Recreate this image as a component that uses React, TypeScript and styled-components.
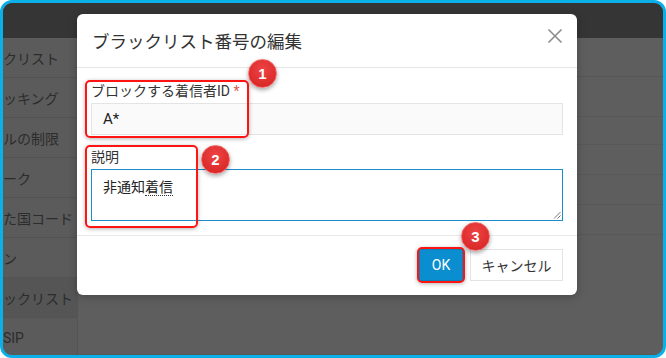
import React from 'react';
import styled, { createGlobalStyle } from 'styled-components';

const FONT = `Roboto, "Noto Sans CJK JP", "Noto Sans", sans-serif`;

const sideItems = ['クリスト', 'ッキング', 'ルの制限', 'ーク', 'た国コード', 'ン', 'ックリスト', 'SIP'];
const mainRows = [40, 28, 30, 30, 30, 120];

const Global = createGlobalStyle`
  html, body {
    margin: 0;
    padding: 0;
    background: #ffffff;
  }
  * {
    box-sizing: border-box;
  }
`;

export default function App() {
  return (
    <>
      <Global />
      <Frame>
        <TopBar />
        <Body>
          <Sidebar>
            {sideItems.map((label, i) => (
              <SideItem key={label} $active={i === 6}>
                {label}
              </SideItem>
            ))}
          </Sidebar>
          <Main>
            <MainHead />
            {mainRows.map((h, i) => (
              <MainRow key={i} style={{ height: h }} />
            ))}
          </Main>
        </Body>

        <Modal>
          <ModalHeader>
            <Title>ブラックリスト番号の編集</Title>
            <CloseButton aria-label="close">
              <svg width="16" height="16" viewBox="0 0 16 16">
                <path d="M1.5 1.5 L14.5 14.5 M14.5 1.5 L1.5 14.5" stroke="#8c8c8c" strokeWidth="1.6" fill="none" />
              </svg>
            </CloseButton>
          </ModalHeader>
          <ModalBody>
            <Field>
              <Label>
                ブロックする着信者ID <Required>*</Required>
              </Label>
              <Input>A*</Input>
            </Field>
            <Field>
              <Label>説明</Label>
              <TextArea>
                非通知<Misspelled>着信</Misspelled>
                <Grip width="8" height="8" viewBox="0 0 8 8">
                  <path d="M7.5 1 L1 7.5 M7.5 4.5 L4.5 7.5" stroke="#777" strokeWidth="1" fill="none" />
                </Grip>
              </TextArea>
            </Field>
          </ModalBody>
          <ModalFooter>
            <PrimaryButton>OK</PrimaryButton>
            <DefaultButton>キャンセル</DefaultButton>
          </ModalFooter>
        </Modal>

        <Highlight $x={82} $y={77} $w={164} $h={58} />
        <Highlight $x={82} $y={142} $w={113} $h={83} />
        <Highlight $x={414} $y={244} $w={48} $h={36} />
        <Badge $x={259} $y={70}>1</Badge>
        <Badge $x={212} $y={156}>2</Badge>
        <Badge $x={472} $y={233}>3</Badge>
      </Frame>
    </>
  );
}

const Frame = styled.div`
  position: relative;
  width: 666px;
  height: 358px;
  border: 3px solid #0cb0e8;
  border-radius: 12px;
  overflow: hidden;
  background: #5e5e5e;
  display: flex;
  flex-direction: column;
  font-family: ${FONT};
`;

const TopBar = styled.div`
  height: 35px;
  flex-shrink: 0;
  background: #353535;
`;

const Body = styled.div`
  flex: 1;
  display: flex;
  min-height: 0;
`;

const Sidebar = styled.div`
  width: 75px;
  flex-shrink: 0;
  background: #5b5b5b;
  border-right: 1px solid #545454;
  display: flex;
  flex-direction: column;
`;

const SideItem = styled.div<{ $active?: boolean }>`
  height: 40px;
  flex-shrink: 0;
  display: flex;
  align-items: center;
  padding-left: 0;
  font-size: 14px;
  color: #2c2c2c;
  white-space: nowrap;
  overflow: hidden;
  background: ${(p) => (p.$active ? '#555555' : 'transparent')};
  border-bottom: 1px solid #535353;
`;

const Main = styled.div`
  flex: 1;
  display: flex;
  flex-direction: column;
`;

const MainHead = styled.div`
  height: 39px;
  flex-shrink: 0;
  border-bottom: 1px solid #555555;
`;

const MainRow = styled.div`
  flex-shrink: 0;
  border-bottom: 1px solid #585858;
`;

const Modal = styled.div`
  position: absolute;
  left: 74px;
  top: 11px;
  width: 500px;
  height: 281px;
  background: #ffffff;
  border-radius: 6px;
  box-shadow: 0 2px 8px rgba(0, 0, 0, 0.25);
  display: flex;
  flex-direction: column;
`;

const ModalHeader = styled.div`
  height: 54px;
  flex-shrink: 0;
  display: flex;
  align-items: center;
  justify-content: space-between;
  padding: 0 15px;
  border-bottom: 1px solid #e5e5e5;
`;

const Title = styled.h2`
  margin: 0;
  font-size: 17.5px;
  font-weight: 400;
  color: #333333;
`;

const CloseButton = styled.div`
  width: 16px;
  height: 16px;
  display: flex;
  margin-right: -1px;
  margin-top: -9px;
`;

const ModalBody = styled.div`
  padding: 15px 14px 14px 14px;
  display: flex;
  flex-direction: column;
  gap: 14px;
  border-bottom: 1px solid #e8e8e8;
`;

const Field = styled.div`
  display: flex;
  flex-direction: column;
  gap: 3px;
`;

const Label = styled.label`
  font-size: 14px;
  line-height: 17px;
  color: #333333;
`;

const Required = styled.span`
  color: #e05a4f;
`;

const Input = styled.div`
  height: 32px;
  border: 1px solid #e4e4e4;
  background: #fafafa;
  display: flex;
  align-items: center;
  padding-left: 11px;
  font-size: 15px;
  color: #222222;
`;

const TextArea = styled.div`
  position: relative;
  height: 52px;
  border: 1px solid #1a8dca;
  padding: 6px 11px;
  font-size: 14px;
  color: #222222;
`;

const Misspelled = styled.span`
  border-bottom: 1px dotted #333333;
`;

const Grip = styled.svg`
  position: absolute;
  right: 1px;
  bottom: 1px;
`;

const ModalFooter = styled.div`
  flex: 1;
  display: flex;
  justify-content: flex-end;
  align-items: center;
  gap: 7px;
  padding: 0 14px 2px 0;
`;

const ButtonBase = styled.div`
  height: 32px;
  display: flex;
  align-items: center;
  justify-content: center;
  font-size: 14px;
`;

const PrimaryButton = styled(ButtonBase)`
  width: 44px;
  background: #0b8ecf;
  color: #ffffff;
  border: 1px solid #0a80bb;
`;

const DefaultButton = styled(ButtonBase)`
  width: 93px;
  background: #ffffff;
  color: #333333;
  border: 1px solid #e3e3e3;
`;

const Highlight = styled.div<{ $x: number; $y: number; $w: number; $h: number }>`
  position: absolute;
  left: ${(p) => p.$x}px;
  top: ${(p) => p.$y}px;
  width: ${(p) => p.$w}px;
  height: ${(p) => p.$h}px;
  border: 2px solid #ff1414;
  border-radius: 5px;
  box-shadow: 0 1px 4px rgba(0, 0, 0, 0.3);
  pointer-events: none;
`;

const Badge = styled.div<{ $x: number; $y: number }>`
  position: absolute;
  left: ${(p) => p.$x - 14}px;
  top: ${(p) => p.$y - 14}px;
  width: 29px;
  height: 29px;
  border-radius: 50%;
  background: radial-gradient(circle at 50% 35%, #ee4444 0%, #dc2b2b 70%, #c92222 100%);
  border: 1px solid #f06060;
  box-shadow: 0 2px 4px rgba(0, 0, 0, 0.35);
  color: #ffffff;
  font-family: "Liberation Sans", Arial, sans-serif;
  font-weight: 700;
  font-size: 15px;
  display: flex;
  align-items: center;
  justify-content: center;
`;
